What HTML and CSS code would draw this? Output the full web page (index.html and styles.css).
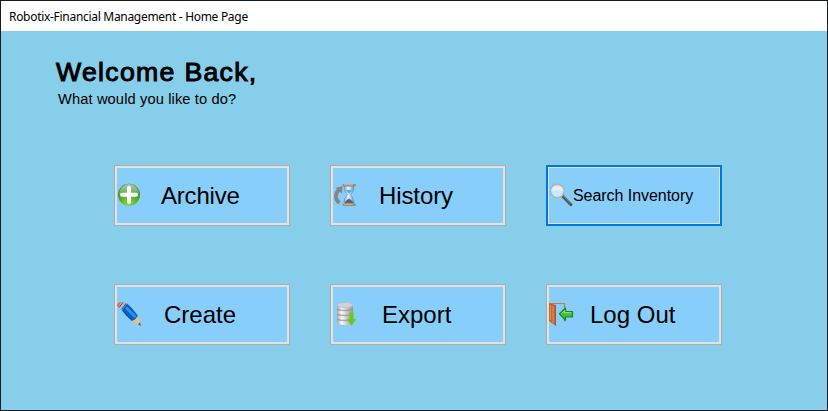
FILE: index.html
```html
<!DOCTYPE html>
<html lang="en">
<head>
<meta charset="utf-8">
<title>Robotix-Financial Management - Home Page</title>
<link rel="stylesheet" href="styles.css">
</head>
<body>
<div class="window">
  <header class="titlebar"><span class="title">Robotix-Financial Management - Home Page</span></header>
  <main class="content">
    <h1 class="welcome">Welcome Back,</h1>
    <p class="prompt">What would you like to do?</p>
    <div class="grid">
      <button class="action">
        <svg class="icon" viewBox="0 0 27 27">
          <defs>
            <radialGradient id="green" cx=".5" cy=".85" r=".9"><stop offset="0" stop-color="#8fe03c"/><stop offset=".5" stop-color="#4aa52c"/><stop offset="1" stop-color="#3c7a34"/></radialGradient>
            <linearGradient id="shine" x2="0" y2="1"><stop offset="0" stop-color="#fff" stop-opacity=".6"/><stop offset="1" stop-color="#fff" stop-opacity=".1"/></linearGradient>
          </defs>
          <circle cx="12" cy="12.8" r="11" fill="url(#green)"/>
          <path d="M2 12a10 10 0 0 1 20 0Q12 15 2 12Z" fill="url(#shine)"/>
          <path d="M12 6v14M5 12.800h14" stroke="#fff" stroke-width="4" stroke-linecap="round"/>
        </svg>
        <span class="label archive">Archive</span>
      </button>
      <button class="action">
        <svg class="icon" viewBox="0 0 27 27">
          <defs><linearGradient id="glass"><stop offset="0" stop-color="#7d98b2"/><stop offset=".4" stop-color="#eaf7ff"/><stop offset=".7" stop-color="#9ed0f2"/><stop offset="1" stop-color="#6585a5"/></linearGradient></defs>
          <path d="M6.500 21C2 18 1.500 11 6.500 7.500" fill="none" stroke="#858585" stroke-width="3.600"/>
          <path d="M2.500 6 9.500 4 9 11.500Z" fill="#858585"/>
          <path d="M11 4h10c0 5-1.500 6-3.500 9 2 2 3.500 4 3.500 9H11c0-5 1.500-7 3.500-9C12.500 10 11 9 11 4Z" fill="url(#glass)" stroke="#6d9cc8" stroke-width=".8"/>
          <path d="M12.500 8h7l-3.500 4Z" fill="#5ca8df"/>
          <path d="M11.500 21.500q1-3 4.500-5 3.500 2 4.500 5Z" fill="#59636b"/>
          <path d="M10.500 3.200h11.500M10.500 22.800h11.500" stroke="#a48b68" stroke-width="2.200" stroke-linecap="round"/>
          <path d="M11 2.700h9M11 22.300h9" stroke="#ddd0b5" stroke-width=".7"/>
        </svg>
        <span class="label history">History</span>
      </button>
      <button class="action focused">
        <svg class="icon" viewBox="0 0 27 27">
          <path d="m13.500 14 8.300 8.500" stroke="#555" stroke-width="3.200" stroke-linecap="round"/>
          <path d="m14 13.500 8 8" stroke="#999" stroke-width=".8"/>
          <circle cx="8.300" cy="9" r="6.800" fill="#c4eaff" stroke="#b3b3b3" stroke-width="1.500"/>
          <path d="M2.200 9a6.200 6.200 0 0 1 12.200 0q-6-1-12.200 0Z" fill="#e7edf0"/>
        </svg>
        <span class="label search">Search Inventory</span>
      </button>
      <button class="action">
        <svg class="icon" viewBox="0 0 27 27">
          <path d="M0 4.500Q1 1 5 1l5 1.500-5 6.500Z" fill="#b4b8bb"/>
          <path d="M0 5Q0 1.500 4 1L1.500 6Z" fill="#df6555"/>
          <path d="m2 6.500 4-5.200M4.500 8.500l4.500-6" stroke="#4e5357" stroke-width="1"/>
          <path d="m5 9 5-6.500q5 4 11 12.500l-1.500 4-4 1Q9 15 5 9Z" fill="#0b60c4"/>
          <path d="m9 6.500 9.500 9.500" stroke="#2595f1" stroke-width="2.600"/>
          <path d="M5.500 9.500q5 6 9.500 10" fill="none" stroke="#0a3c83" stroke-width="1"/>
          <path d="m15 20 3-1.500 2.800-3.500 3.200 10Z" fill="#f0bd82"/>
          <path d="m21 23.300 3 1.700-1-3.500Z" fill="#555"/>
        </svg>
        <span class="label create">Create</span>
      </button>
      <button class="action">
        <svg class="icon" viewBox="0 0 27 27">
          <defs><linearGradient id="disk"><stop offset="0" stop-color="#aaa"/><stop offset=".3" stop-color="#fafafa"/><stop offset=".6" stop-color="#ccc"/><stop offset="1" stop-color="#999"/></linearGradient></defs>
          <path d="M4 4v18.500q8 3 16 0V4Z" fill="url(#disk)"/>
          <path d="M4 8.500q8 2 16 0M4 13.500q8 2 16 0M4 18.500q8 2 16 0" fill="none" stroke="#8c8c8c" stroke-opacity=".65" stroke-width="1.300"/>
          <ellipse cx="12" cy="4" rx="8" ry="2.600" fill="#cdd3d7" stroke="#b9bdc0" stroke-width=".8"/>
          <path d="M16.500 11.500h4V18h2.500L18.500 24.500 14 18h2.500Z" fill="#69c522" stroke="#82ca46" stroke-width=".7"/>
        </svg>
        <span class="label export">Export</span>
      </button>
      <button class="action">
        <svg class="icon" viewBox="0 0 27 27">
          <path d="M0 2.500h15.500v18" fill="none" stroke="#c87842" stroke-width="1.200"/>
          <path d="M0 2 7 4v21l-7-5Z" fill="#bf682f"/>
          <path d="M1.500 4v15M4 5v17" stroke="#e19258" stroke-width="1"/>
          <path d="M6.500 4v20.500" stroke="#a25a2b"/>
          <path d="M10.500 12.800 16.500 7v3.500h7v5.500h-7v3.300Z" fill="#45bd38" stroke="#168826" stroke-width="1.200" stroke-linejoin="round"/>
          <path d="m12.500 12.500 3.200-2.800v2h6.500" fill="none" stroke="#93e67d"/>
        </svg>
        <span class="label logout">Log Out</span>
      </button>
    </div>
  </main>
</div>
</body>
</html>
```
FILE: styles.css
```css
* { box-sizing: border-box; }
body { margin: 0; }
.window {
  width: 828px;
  height: 411px;
  border: 1px solid #181c20;
  background: #87ceeb;
  color: #000;
  font-family: "Liberation Sans", Arial, sans-serif;
}
.titlebar {
  display: flex;
  align-items: center;
  height: 30px;
  padding-left: 8px;
  background: #fff;
  font: 12px "Noto Sans", sans-serif;
}
.title { letter-spacing: -0.3px; }
.content { padding: 26px 0 0 55px; }
.welcome {
  margin: 0;
  font-size: 26.67px;
  font-weight: 400;
  line-height: 30px;
  letter-spacing: 1.3px;
  -webkit-text-stroke: 1px #000;
}
.prompt {
  margin: 2px 0 0 2px;
  font-size: 14.67px;
  line-height: 20px;
  letter-spacing: 0.12px;
}
.grid {
  display: grid;
  grid-template-columns: repeat(3, 176px);
  gap: 58px 40px;
  margin: 56px 0 0 58px;
}
.action {
  display: flex;
  align-items: center;
  height: 61px;
  padding: 0;
  border: 1px solid #adadad;
  background: #87cefa;
  box-shadow: inset 0 0 0 2px #e1e1e1;
  color: #000;
  font-family: inherit;
  font-size: 24px;
  text-align: left;
}
.focused {
  border: 2px solid #0078d7;
  box-shadow: inset 0 0 0 1px #e1e1e1;
}
.icon { flex: none; width: 27px; height: 27px; margin-left: 2px; }
.focused .icon { margin-left: 1px; }
.label { white-space: nowrap; }
.archive { margin-left: 17px; letter-spacing: -0.2px; }
.history { margin-left: 19px; letter-spacing: -0.1px; }
.search { margin-left: -3px; font-size: 16px; letter-spacing: -0.05px; }
.create { margin-left: 20px; }
.export { margin-left: 22px; }
.logout { margin-left: 14px; }
```
